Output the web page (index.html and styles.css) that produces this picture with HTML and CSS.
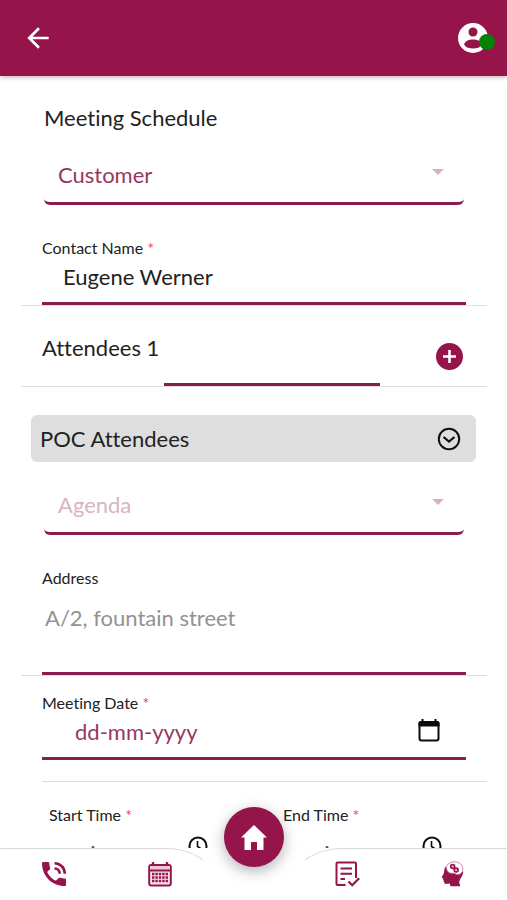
FILE: index.html
```html
<!DOCTYPE html>
<html lang="en">
<head>
<meta charset="utf-8">
<meta name="viewport" content="width=device-width, initial-scale=1">
<title>Meeting Schedule</title>
<link rel="stylesheet" href="styles.css">
</head>
<body>
<div class="app">
  <header class="topbar">
    <button class="icon-button" type="button" aria-label="Back">
      <svg width="32" height="32" viewBox="0 0 24 24" fill="currentColor"><path d="M20 11H7.830l5.590-5.590L12 4l-8 8 8 8 1.410-1.410L7.830 13H20z"/></svg>
    </button>
    <button class="icon-button profile" type="button" aria-label="Profile">
      <svg width="30" height="30" viewBox="0 0 30 30"><circle cx="15" cy="15" r="15" fill="#fff"/><circle cx="15" cy="9" r="4.500" fill="#95144a"/><path d="M6 21.500C7.500 17.500 11 16.500 15 16.500s7.500 1 9 5C22 24.500 19 25.500 15 25.500s-7-1-9-4z" fill="#95144a"/></svg>
      <span class="status"></span>
    </button>
  </header>

  <main class="content">
    <form>
      <h1 class="title">Meeting Schedule</h1>

      <div class="select-wrap">
        <select class="select" aria-label="Meeting type"><option>Customer</option></select>
      </div>

      <div class="item">
        <label class="label" for="contact">Contact Name <span class="required">*</span></label>
        <input class="input contact" id="contact" type="text" value="Eugene Werner">
      </div>

      <div class="item attendees">
        <label class="attendees-label" for="attendee">Attendees 1</label>
        <input class="input attendee-input" id="attendee" type="text">
        <button class="add" type="button" aria-label="Add attendee">
          <svg width="27" height="27" viewBox="0 0 27 27"><circle cx="13.500" cy="13.500" r="13.500" fill="#95144a"/><path d="M13.500 7v13M7 13.500h13" stroke="#fff" stroke-width="2.600"/></svg>
        </button>
      </div>

      <button class="accordion" type="button" aria-expanded="false">
        <span>POC Attendees</span>
        <svg width="24" height="24" viewBox="0 0 24 24" fill="none" stroke="#111" stroke-width="2"><circle cx="12" cy="12" r="10.200"/><path d="M6.500 10l5.500 4.500 5.500-4.500" stroke-width="2.200"/></svg>
      </button>

      <div class="select-wrap">
        <select class="select empty" aria-label="Agenda"><option>Agenda</option></select>
      </div>

      <div class="item">
        <label class="label" for="address">Address</label>
        <textarea class="input address" id="address" placeholder="A/2, fountain street"></textarea>
      </div>

      <div class="date-item">
        <label class="label" for="date">Meeting Date <span class="required">*</span></label>
        <div class="picker">
          <input class="input date" id="date" type="text" placeholder="dd-mm-yyyy">
          <button class="picker-icon" type="button" aria-label="Choose date">
            <svg width="22" height="23" viewBox="0 0 22 23"><path d="M1.500 4.500v15a2 2 0 0 0 2 2h15a2 2 0 0 0 2-2v-15z" fill="none" stroke="#0c0c0c" stroke-width="2"/><path d="M.5 7.500V4a2 2 0 0 1 2-2H3.500V0h2v2h11V0h2v2h1a2 2 0 0 1 2 2v3.500z" fill="#0c0c0c"/></svg>
          </button>
        </div>
      </div>

      <div class="times">
        <div class="time">
          <label class="label" for="start">Start Time <span class="required">*</span></label>
          <div class="picker">
            <input class="input time-input" id="start" type="text" placeholder="--:--">
            <button class="picker-icon clock" type="button" aria-label="Choose start time">
              <svg width="20" height="20" viewBox="0 0 20 20" fill="none" stroke="#0c0c0c" stroke-width="2"><circle cx="10" cy="10" r="8.500"/><path d="M9.500 5v5.500l4 2.500" stroke-width="1.600"/></svg>
            </button>
          </div>
        </div>
        <div class="time">
          <label class="label" for="end">End Time <span class="required">*</span></label>
          <div class="picker">
            <input class="input time-input" id="end" type="text" placeholder="--:--">
            <button class="picker-icon clock" type="button" aria-label="Choose end time">
              <svg width="20" height="20" viewBox="0 0 20 20" fill="none" stroke="#0c0c0c" stroke-width="2"><circle cx="10" cy="10" r="8.500"/><path d="M9.500 5v5.500l4 2.500" stroke-width="1.600"/></svg>
            </button>
          </div>
        </div>
      </div>
    </form>
  </main>

  <nav class="tabbar" aria-label="Main">
    <div class="wing wing-left">
      <a class="tab" href="#calls" aria-label="Calls">
        <svg width="26" height="26" viewBox="0 0 26 26"><path d="M1 2.200C1 1.500 1.600 1 2.300 1h4.700c.7 0 1.200.5 1.300 1.200.1 1.700.4 3.300.9 4.700.2.500 0 1-.3 1.300L6.100 11c1.900 3.900 4.900 6.900 8.800 8.800l2.800-2.700c.4-.4.9-.5 1.400-.3 1.400.5 3 .7 4.700.8.700 0 1.200.6 1.200 1.300v4.800c0 .7-.5 1.300-1.200 1.300C11 25 1 15 1 2.200z" fill="#95144a"/><path d="M13.500 2.200c5.800 0 10.300 4.600 10.300 10.600M13.500 7.500c3 0 5.200 2.300 5.200 5.300" fill="none" stroke="#95144a" stroke-width="2.600"/></svg>
      </a>
      <a class="tab" href="#calendar" aria-label="Calendar">
        <svg width="24" height="26" viewBox="0 0 24 26"><rect x="1.200" y="4" width="21.600" height="20.500" rx="2" fill="#f6e6ed" stroke="#95144a" stroke-width="2"/><path d="M2 5h20v4H2z" fill="#e9c9d7"/><path d="M5 1v4M19 1v4" stroke="#95144a" stroke-width="2.400"/><path d="M1 9.500h22" stroke="#95144a" stroke-width="2"/><path d="M4 13h16M4 16.500h16M4 20h16" stroke="#95144a" stroke-width="2.500" stroke-dasharray="2.400 1"/></svg>
      </a>
    </div>
    <div class="notch">
      <a class="home" href="#home" aria-label="Home">
        <svg width="28" height="28" viewBox="0 0 28 28"><path d="M14 2L1 14.500h3.500V27H11v-8h6v8h6.500V14.500H27z" fill="#fff"/></svg>
      </a>
    </div>
    <div class="wing wing-right">
      <a class="tab" href="#tasks" aria-label="Tasks">
        <svg width="25" height="26" viewBox="0 0 25 26" fill="none" stroke="#95144a" stroke-width="2"><path d="M10.500 24H2.500a1 1 0 0 1-1-1V2.500a1 1 0 0 1 1-1h17.500a1 1 0 0 1 1 1V17M5.500 7.500h11.500M5.500 12.800h11.500M5.500 18h4.500"/><path d="M13.500 20.500l3.700 3.700 7-7" stroke-width="2.300"/></svg>
      </a>
      <a class="tab" href="#insights" aria-label="Insights">
        <svg width="24" height="26" viewBox="0 0 24 26"><path d="M4 6C3 10 3.300 11.500 2.500 13L.7 16.200c-.2.500.1.900 1.300 1l.2 1.600.6.700-.3.900.7.600c0 1.300.5 1.900 1.700 1.900l3.500-.5c.8.700 1 1.700.9 2.900h10l-1-3.500c0-4 3.500-6 4-11z" fill="#95144a"/><path d="M5.500 7.500C4.800 3.500 9 .8 13.500.8c4.800 0 8.300 3 8.300 7.200 0 3.600-2.600 6-6.300 5.500-1.500-1-2.700-1.300-4.500-1.200-2.800.2-5-1.500-5.500-4.800z" fill="#fff" stroke="#b86b8d" stroke-width=".8"/><circle cx="11.700" cy="5.500" r="2" fill="#d9a9bf" stroke="#95144a" stroke-width="1.600"/><circle cx="15.200" cy="9" r="2" fill="#d9a9bf" stroke="#95144a" stroke-width="1.600"/></svg>
      </a>
    </div>
  </nav>
</div>
</body>
</html>
```
FILE: styles.css
```css
:root {
  --brand: #95144a;
  --line: #8a1c4e;
  --rule: #dedede;
  --text: #222;
}

* {
  box-sizing: border-box;
}

body {
  margin: 0;
  background: #fff;
  color: var(--text);
  font: 22px/28px Lato, "Liberation Sans", sans-serif;
  font-variant-ligatures: none;
}

button,
input,
select,
textarea {
  margin: 0;
  padding: 0;
  border: 0;
  border-radius: 0;
  background: none;
  color: inherit;
  font: inherit;
  font-variant-ligatures: none;
}

svg {
  display: block;
}

.app {
  display: flex;
  flex-direction: column;
  height: 100vh;
}

.topbar {
  position: relative;
  z-index: 1;
  display: flex;
  flex: none;
  align-items: center;
  justify-content: space-between;
  height: 76px;
  padding: 0 19px 0 22px;
  background: var(--brand);
  color: #fff;
  box-shadow: 0 1px 5px rgba(60, 0, 30, 0.35);
}

.profile {
  position: relative;
}

.status {
  position: absolute;
  top: 11px;
  left: 21px;
  width: 16px;
  height: 16px;
  border-radius: 50%;
  background: #068206;
}

.content {
  flex: 1;
  min-height: 0;
  overflow: hidden;
  padding: 28px 20px 0 21px;
}

.title {
  margin: 0 0 16px;
  padding-left: 23px;
  font-size: 22px;
  font-weight: 400;
}

.select-wrap {
  position: relative;
  margin: 0 23px;
}

.select-wrap::after {
  content: "";
  position: absolute;
  top: 21px;
  right: 20px;
  border: 6px solid transparent;
  border-top-color: #d8b1c1;
  border-bottom: 0;
  pointer-events: none;
}

.select {
  display: block;
  width: 100%;
  height: 57px;
  padding: 0 40px 0 14px;
  border-bottom: 3px solid var(--line);
  border-radius: 6px;
  color: #97375f;
  appearance: none;
}

.select.empty {
  color: #d8b4c3;
}

.item {
  padding: 33px 21px 0;
  border-bottom: 1px solid var(--rule);
}

.label {
  display: block;
  font-size: 16px;
  line-height: 20px;
}

.required {
  color: #e8475b;
}

.input {
  display: block;
  width: 100%;
  height: 47px;
  padding-bottom: 7px;
  border-bottom: 3px solid var(--line);
}

.contact {
  padding-left: 21px;
}

.attendees {
  display: flex;
  align-items: flex-end;
  height: 81px;
  padding-top: 0;
}

.attendees-label {
  width: 122px;
  margin-bottom: 24px;
}

.attendee-input {
  flex: 1;
}

.add {
  margin: 0 3px 16px 56px;
}

.accordion {
  display: flex;
  align-items: center;
  justify-content: space-between;
  width: calc(100% - 21px);
  height: 47px;
  margin: 28px 0 16px 10px;
  padding: 0 15px 0 9px;
  border-radius: 6px;
  background: #dedede;
}

.address {
  height: 87px;
  padding: 16px 3px 0;
  resize: none;
}

.address::placeholder {
  color: #929292;
}

.date-item {
  margin-left: 21px;
  padding: 17px 0 21px;
  border-bottom: 1px solid var(--rule);
}

.date-item .picker {
  margin-right: 21px;
}

.picker {
  position: relative;
}

.date {
  padding-left: 33px;
}

.date::placeholder,
.time-input::placeholder {
  color: #97375f;
}

.picker-icon {
  position: absolute;
  top: 6px;
  right: 26px;
}

.times {
  display: grid;
  grid-template-columns: 1fr 1fr;
  column-gap: 30px;
  padding: 23px 0 0 28px;
}

.time .picker {
  margin-right: 19px;
}

.time-input {
  height: 56px;
  padding-left: 25px;
}

.clock {
  top: 11px;
}

.tabbar {
  position: relative;
  display: flex;
  flex: none;
  height: 52px;
}

.wing {
  display: grid;
  flex: 1;
  grid-template-columns: 1fr 1fr;
  border: 1px solid transparent;
  border-top-color: #d8d8d8;
}

.wing-left {
  border-top-right-radius: 48px 32px;
}

.wing-right {
  border-top-left-radius: 48px 32px;
}

.tab {
  display: flex;
  align-items: center;
  justify-content: center;
}

.notch {
  display: flex;
  justify-content: center;
  width: 80px;
}

.home {
  position: absolute;
  top: -41px;
  display: flex;
  align-items: center;
  justify-content: center;
  width: 60px;
  height: 60px;
  border-radius: 50%;
  background: var(--brand);
  box-shadow: 0 4px 14px rgba(30, 30, 60, 0.35);
}
```
